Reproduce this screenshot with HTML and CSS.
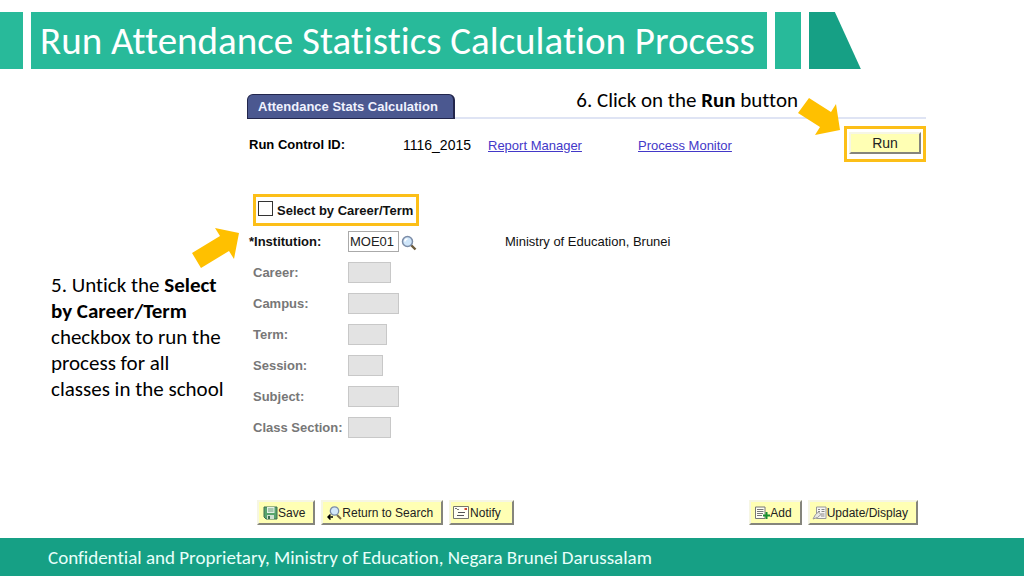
FILE: index.html
```
<!DOCTYPE html>
<html lang="en">
<head>
<meta charset="utf-8">
<meta name="viewport" content="width=device-width, initial-scale=1">
<title>Run Attendance Statistics Calculation Process</title>
<link rel="stylesheet" href="styles.css">
</head>
<body>
<header class="banner">
  <div class="banner-edge"></div>
  <h1 class="banner-title">Run Attendance Statistics Calculation Process</h1>
  <div class="banner-bar"></div>
  <div class="banner-tip"></div>
</header>

<main class="content">
  <aside class="side">
    <svg class="side-arrow" width="50" height="44" viewBox="0 0 50 44" aria-hidden="true"><path fill="#ffc000" d="M1 25 29 8 24 0 48 5 43 31 38 23 10 40Z"/></svg>
    <p class="note">5. Untick the <b>Select by Career/Term</b> checkbox to run the process for all classes in the school</p>
  </aside>

  <section class="panel">
    <div class="tabs">
      <h2 class="tab">Attendance Stats Calculation</h2>
      <p class="callout">6. Click on the <b>Run</b> button</p>
      <svg class="run-arrow" width="42" height="38" viewBox="0 0 42 38" aria-hidden="true"><path fill="#ffc000" d="M11 0 33 14 38 6 42 32 17 37 22 29 0 15Z"/></svg>
    </div>

    <div class="run-row">
      <b class="run-label">Run Control ID:</b>
      <span class="run-id">1116_2015</span>
      <a class="link" href="#">Report Manager</a>
      <a class="link" href="#">Process Monitor</a>
      <div class="run-frame"><button class="btn run-btn" type="button">Run</button></div>
    </div>

    <form class="form">
      <label class="select-by"><input class="tick" type="checkbox">Select by Career/Term</label>
      <div class="field required">
        <label class="field-label" for="institution">*Institution:</label>
        <input class="box w-m" id="institution" type="text" value="MOE01">
        <button class="lookup" type="button" aria-label="Look up institution">
          <svg width="16" height="16" viewBox="0 0 16 16"><path d="M10 10 14.500 14.500" stroke="#6b5a3c" stroke-width="2.400"/><circle cx="6.500" cy="6.500" r="5" fill="#cfe6fa" stroke="#7c8da8" stroke-width="1.500"/><path d="M4 6.500Q4 4 6.500 4" fill="none" stroke="#fff" stroke-width="1.500"/></svg>
        </button>
        <span class="field-text">Ministry of Education, Brunei</span>
      </div>
      <div class="field"><label class="field-label" for="career">Career:</label><input class="box w-s" id="career" type="text" disabled></div>
      <div class="field"><label class="field-label" for="campus">Campus:</label><input class="box w-m" id="campus" type="text" disabled></div>
      <div class="field"><label class="field-label" for="term">Term:</label><input class="box w-xs" id="term" type="text" disabled></div>
      <div class="field"><label class="field-label" for="session">Session:</label><input class="box w-xxs" id="session" type="text" disabled></div>
      <div class="field"><label class="field-label" for="subject">Subject:</label><input class="box w-m" id="subject" type="text" disabled></div>
      <div class="field"><label class="field-label" for="section">Class Section:</label><input class="box w-s" id="section" type="text" disabled></div>
    </form>

    <div class="actions">
      <button class="btn" type="button">
        <svg width="15" height="14" viewBox="0 0 15 14"><path d="M1 1H14V13H3L1 11Z" fill="#58a46c" stroke="#3c6e50"/><path d="M4 1H11.500V7H4Z" fill="#e4f2e6"/><path d="M5 3H10.500M5 5H10.500" stroke="#6a9c78"/><path d="M4 9H11V13H4Z" fill="#cfe0d2"/><path d="M5 10H7V13H5Z" fill="#3c6e50"/></svg>Save
      </button>
      <button class="btn" type="button">
        <svg width="15" height="14" viewBox="0 0 15 14"><path d="M10 9 14 13" stroke="#7a6a48" stroke-width="2"/><circle cx="7.500" cy="5" r="4.200" fill="#d3e8fa" stroke="#7c8da8" stroke-width="1.300"/><path d="M6 11H1M3.500 8.500 1 11 3.500 13.500" fill="none" stroke="#000" stroke-width="1.500"/></svg>Return to Search
      </button>
      <button class="btn btn-notify" type="button">
        <svg width="17" height="14" viewBox="0 0 17 14"><path d="M.5 .5H15.500V12.500H.5Z" fill="#fffff4" stroke="#77776c"/><path d="M2 2.500H4M4 3.500H6" stroke="#777"/><path d="M11.500 3H14" stroke="#d04830" stroke-width="2"/><path d="M5 6.500H12M4 9.500H11" stroke="#555"/></svg>Notify
      </button>
      <button class="btn push" type="button">
        <svg width="15" height="14" viewBox="0 0 15 14"><path d="M.5 1H10V12.500H.5Z" fill="#fffff4" stroke="#777"/><path d="M2 3.500H8.500M2 5.500H8.500M2 7.500H8M2 9.500H7" stroke="#777"/><path d="M11.500 6V13M8 9.500H15" stroke="#189030" stroke-width="2"/></svg>Add
      </button>
      <button class="btn btn-update" type="button">
        <svg width="15" height="14" viewBox="0 0 15 14"><path d="M4.500 1H14V12.500H4.500Z" fill="#f6f6f4" stroke="#999"/><path d="M6 3.500H8M9.500 3.500H12.500M6 5.500H8M9.500 5.500H12.500M9 8H12.500M9 10H12.500" stroke="#888"/><path d="M1 13 3.500 8.500 6.500 6 9 8.500 5.500 11.500Z" fill="#e8e8e4" stroke="#999"/></svg>Update/Display
      </button>
    </div>
  </section>
</main>

<footer class="footer">Confidential and Proprietary, Ministry of Education, Negara Brunei Darussalam</footer>
</body>
</html>
```
FILE: styles.css
```
* { box-sizing: border-box; }

body {
  margin: 0;
  min-height: 100vh;
  display: flex;
  flex-direction: column;
  background: #fff;
  color: #000;
  font-family: Carlito, Calibri, Lato, sans-serif;
  font-variant-ligatures: none;
}

h1, h2, p { margin: 0; font-weight: normal; }

.banner { display: flex; gap: 8px; padding-top: 12px; }
.banner-edge { width: 23px; background: #28ba9a; }
.banner-title {
  padding: 0 12px 0 9px;
  background: #28ba9a;
  color: #fff;
  font-size: 39px;
  line-height: 57px;
  white-space: nowrap;
}
.banner-bar { width: 26px; background: #28ba9a; }
.banner-tip { width: 52px; background: #16a085; clip-path: polygon(0 0, 50% 0, 100% 100%, 0 100%); }

.content { flex: 1; display: grid; grid-template-columns: 247px 1fr; padding: 25px 98px 13px 0; }

.side { padding: 134px 18px 0 51px; }
.side-arrow { display: block; margin-left: 140px; }
.note { font-size: 21px; line-height: 26px; }

.panel {
  display: flex;
  flex-direction: column;
  font-family: "Liberation Sans", Arial, sans-serif;
  font-size: 13px;
}

.tabs { position: relative; display: flex; border-bottom: 2px solid #dfe4f4; }
.tab {
  padding: 0 15px 0 10px;
  margin-bottom: -2px;
  border: 1px solid #22264c;
  border-right-width: 2px;
  border-radius: 6px 6px 0 0;
  background: #4b5890;
  color: #f0f2ff;
  font-size: 13px;
  font-weight: bold;
  line-height: 23px;
}
.callout {
  position: absolute;
  right: 128px;
  top: -7px;
  font-family: Carlito, Calibri, Lato, sans-serif;
  font-size: 21px;
  line-height: 26px;
}
.run-arrow { position: absolute; right: 86px; top: 4px; z-index: 1; }

.run-row {
  display: grid;
  grid-template-columns: 154px 85px 150px 1fr auto;
  align-items: center;
  padding: 7px 0 0 2px;
  font-size: 14px;
}
.run-id, .link { padding-top: 2px; }
.run-label { font-size: 13px; }
.link { justify-self: start; color: #4338c8; font-size: 13px; }
.run-frame { padding: 3px 2px 5px; border: 3px solid #fcbf18; }

.btn {
  display: flex;
  align-items: center;
  height: 25px;
  padding: 0 8px 0 4px;
  border: 2px solid;
  border-color: #f6f6e4 #85857c #85857c #f6f6e4;
  background: #ffffb4;
  color: #222;
  font-family: inherit;
  font-size: 12px;
  white-space: nowrap;
}
.run-btn { justify-content: center; width: 72px; height: 22px; padding: 0; font-size: 14px; }
.btn-notify { padding: 0 11px 0 2px; }
.btn-update { padding-left: 2px; }

.form { padding: 32px 0 0 6px; }
.select-by {
  display: flex;
  align-items: center;
  gap: 4px;
  width: 166px;
  height: 32px;
  padding: 0 0 0 2px;
  border: 3px solid #fcbf18;
  color: #111;
  font-weight: bold;
  white-space: nowrap;
}
.tick {
  appearance: none;
  flex: none;
  width: 15px;
  height: 15px;
  margin: 0 0 4px;
  border: 1px solid #333;
  background: #fff;
}
.tick:checked { background: #333; }

.field { display: flex; align-items: center; height: 31px; color: #777; font-weight: bold; }
.field-label { width: 95px; white-space: nowrap; }
.required { color: #111; font-weight: normal; }
.required .field-label { width: 99px; margin-left: -4px; font-weight: bold; }
.box {
  height: 21px;
  padding: 0 1px;
  border: 1px solid #aaa;
  background: #fff;
  color: #222;
  font-family: inherit;
  font-size: 13px;
}
.box:disabled { border-color: #c8c8c8; background: #e3e3e3; }
.w-xxs { width: 35px; }
.w-xs { width: 39px; }
.w-s { width: 43px; }
.w-m { width: 51px; }
.lookup { display: flex; padding: 0; margin: 2px 0 0 2px; border: 0; background: none; }
.field-text { margin-left: 88px; }

.actions { display: flex; gap: 6px; padding: 0 8px 0 10px; margin-top: auto; }
.push { margin-left: auto; }

.footer { padding: 2px 48px 0; background: #16a085; color: #e8fffa; font-size: 19px; line-height: 36px; }
```
